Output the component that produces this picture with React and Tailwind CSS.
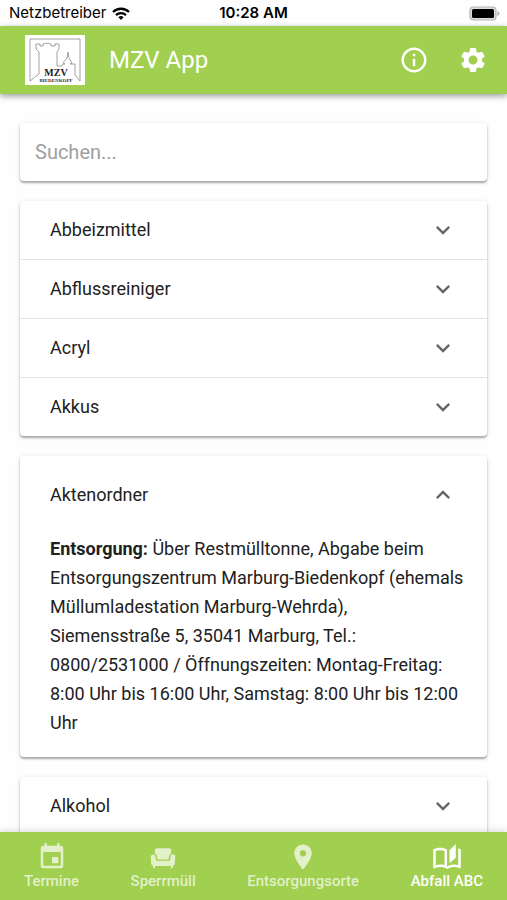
import React, { useState } from "react";
import { MdOutlineInfo, MdSettings, MdExpandMore, MdEvent, MdLocationOn } from "react-icons/md";

const items = [
  { title: "Abbeizmittel" },
  { title: "Abflussreiniger" },
  { title: "Acryl" },
  { title: "Akkus" },
  {
    title: "Aktenordner",
    text: "Über Restmülltonne, Abgabe beim Entsorgungszentrum Marburg-Biedenkopf (ehemals Müllumladestation Marburg-Wehrda), Siemensstraße 5, 35041 Marburg, Tel.: 0800/2531000 / Öffnungszeiten: Montag-Freitag: 8:00 Uhr bis 16:00 Uhr, Samstag: 8:00 Uhr bis 12:00 Uhr",
  },
  { title: "Alkohol" },
];

const cardShadow = "shadow-[0_2px_2px_rgba(0,0,0,0.28),0_1px_5px_rgba(0,0,0,0.12)]";

function ArmchairIcon({ className }) {
  return (
    <svg viewBox="0 0 24 24" fill="currentColor" className={className} aria-hidden="true">
      <path d="M7.400 5h9.200a2 2 0 0 1 2 2.200l-.200 2a3.200 3.200 0 0 0-1.600 2.300L16.500 14h-9l-.300-2.500a3.200 3.200 0 0 0-1.600-2.300l-.200-2a2 2 0 0 1 2-2.200z" />
      <path d="M4 9.900a1.900 1.900 0 0 1 2 1.700l.4 3.400h11.200l.4-3.400a1.900 1.900 0 0 1 3.800.200l-.300 5.400a2 2 0 0 1-1.600 1.800V21h-1.600v-1.900H5.700V21H4.100v-2a2 2 0 0 1-1.600-1.800l-.300-5.400A1.900 1.900 0 0 1 4 9.900z" />
    </svg>
  );
}

function BookIcon({ className }) {
  return (
    <svg viewBox="0 0 24 24" fill="currentColor" className={className} aria-hidden="true">
      <path d="M19 1.500l-5 5v10.500l5-4.500V1.500zM1 6v14.650c0 .25.250.5.500.5.100 0 .150-.050.250-.050C3.100 20.450 5.050 20 6.500 20c1.950 0 4.050.4 5.500 1.500 1.350-.85 3.800-1.500 5.500-1.500 1.650 0 3.350.3 4.750 1.050.1.050.150.050.250.050.250 0 .500-.250.500-.500V6c-.600-.450-1.250-.750-2-1v13.500c-1.100-.350-2.300-.500-3.500-.500-1.700 0-4.150.650-5.500 1.500V6c-1.450-1.100-3.550-1.500-5.500-1.500S2.450 4.900 1 6zm9 12.400c-1.100-.300-2.350-.400-3.500-.400s-2.400.150-3.500.500V7.200c1.050-.450 2.250-.700 3.500-.700s2.450.250 3.500.700v11.200z" />
    </svg>
  );
}

function Logo() {
  return (
    <svg viewBox="0 0 60 50" className="h-[50px] w-[60px] bg-white" role="img" aria-label="MZV Biedenkopf">
      <g fill="none" stroke="#8a8a8a" strokeWidth="0.8">
        <path d="M5 46V4h50v42l-5-6V29h-5l2-1-3-5-1-6-1 6-4 5 2 1h-2l-1 2h-5V17l2-3V9h-4v2h-4V9c-3-1-5-1-8 0v2h-3V9h-4v5l3 3v22z" />
      </g>
      <text x="31" y="41" textAnchor="middle" fontSize="10" fontWeight="700" fontFamily="Liberation Serif, serif" fill="#222">
        MZV
      </text>
      <text x="31" y="47" textAnchor="middle" fontSize="5" fontWeight="700" fontFamily="Liberation Serif, serif" fill="#333">
        BIEDENKOPF
      </text>
    </svg>
  );
}

function StatusBar() {
  return (
    <div className="grid h-[26px] shrink-0 grid-cols-3 items-center px-[7px] font-['Inter',sans-serif] text-[15px] text-black">
      <div className="flex items-center gap-[6px] pl-[2px]">
        <span>Netzbetreiber</span>
        <svg viewBox="0 0 18 13" className="h-[13px] w-[18px]" fill="none" stroke="currentColor" aria-hidden="true">
          <path d="M1 5a11.500 11.500 0 0 1 16 0" strokeWidth="2.300" />
          <path d="M4 8.100a7.200 7.200 0 0 1 10 0" strokeWidth="2.200" />
          <path d="M9 13l-2.600-2.800a3.800 3.800 0 0 1 5.200 0z" fill="currentColor" stroke="none" />
        </svg>
      </div>
      <span className="text-center font-semibold">10:28 AM</span>
      <svg viewBox="0 0 31 15" className="h-[15px] w-[31px] justify-self-end" aria-hidden="true">
        <rect x="1" y="1" width="26" height="13" rx="3.500" fill="#ddd" stroke="#b5b5b5" strokeWidth="1.200" />
        <rect x="3" y="3" width="22" height="9" rx="1.500" />
        <path d="M28.500 5q2 1 2 2.500t-2 2.500z" fill="#aaa" />
      </svg>
    </div>
  );
}

function Entry({ item, open, onToggle }) {
  return (
    <section>
      <h2>
        <button
          type="button"
          aria-expanded={open}
          onClick={onToggle}
          className={`flex w-full items-center justify-between px-[30px] text-left text-lg text-[#212121] ${open ? "h-[78px]" : "h-[58px]"}`}
        >
          {item.title}
          <MdExpandMore className={`size-7 text-[#666] ${open ? "rotate-180" : ""}`} />
        </button>
      </h2>
      {open && (
        <p className="pb-5 pl-[30px] pr-5 text-lg leading-[29px] text-[#212121]">
          <strong>Entsorgung:</strong> {item.text}
        </p>
      )}
    </section>
  );
}

function NavLink({ label, icon: Icon, active }) {
  return (
    <a
      href="#"
      aria-current={active ? "page" : undefined}
      className={`flex flex-col items-center justify-center text-[15px] leading-[18px] font-medium ${active ? "text-white" : "text-white/70"}`}
    >
      <Icon className="size-[30px]" />
      {label}
    </a>
  );
}

export default function App() {
  const [openTitle, setOpenTitle] = useState("Aktenordner");
  const [query, setQuery] = useState("");

  const visible = items.filter((item) => item.title.toLowerCase().includes(query.toLowerCase()));

  // The open entry stands alone, the closed ones around it share a card
  const groups = [];
  visible.forEach((item) => {
    const last = groups[groups.length - 1];
    if (!last || item.title === openTitle || last[0].title === openTitle) {
      groups.push([item]);
    } else {
      last.push(item);
    }
  });

  return (
    <div className="flex h-screen flex-col overflow-hidden bg-[#fefefe] font-['Roboto',sans-serif]">
      <StatusBar />
      <header className="z-10 flex h-[68px] shrink-0 items-center bg-[#a1cf4f] pl-[25px] pr-[19px] text-white shadow-[0_2px_6px_rgba(0,0,0,0.4)]">
        <Logo />
        <h1 className="ml-6 flex-1 text-2xl">MZV App</h1>
        <div className="flex gap-[29px]">
          <button type="button" aria-label="Info">
            <MdOutlineInfo className="size-[30px]" />
          </button>
          <button type="button" aria-label="Einstellungen">
            <MdSettings className="size-[30px]" />
          </button>
        </div>
      </header>

      <main className="flex min-h-0 flex-1 flex-col gap-5 overflow-hidden px-5 pt-[29px]">
        <input
          type="text"
          aria-label="Suchen"
          placeholder="Suchen..."
          value={query}
          onChange={(e) => setQuery(e.target.value)}
          className={`h-[58px] w-full shrink-0 rounded bg-white px-[15px] text-xl placeholder:text-[#a0a0a0] ${cardShadow}`}
        />
        {groups.map((group) => (
          <div key={group[0].title} className={`shrink-0 divide-y divide-[#e4e4e4] rounded-sm bg-white ${cardShadow}`}>
            {group.map((item) => (
              <Entry
                key={item.title}
                item={item}
                open={item.title === openTitle}
                onToggle={() => setOpenTitle(item.title === openTitle ? "" : item.title)}
              />
            ))}
          </div>
        ))}
      </main>

      <nav className="z-10 flex h-[68px] shrink-0 items-stretch justify-between bg-[#a1cf4f] px-6 shadow-[0_-2px_6px_rgba(0,0,0,0.12)]">
        <NavLink label="Termine" icon={MdEvent} />
        <NavLink label="Sperrmüll" icon={ArmchairIcon} />
        <NavLink label="Entsorgungsorte" icon={MdLocationOn} />
        <NavLink label="Abfall ABC" icon={BookIcon} active />
      </nav>
    </div>
  );
}
